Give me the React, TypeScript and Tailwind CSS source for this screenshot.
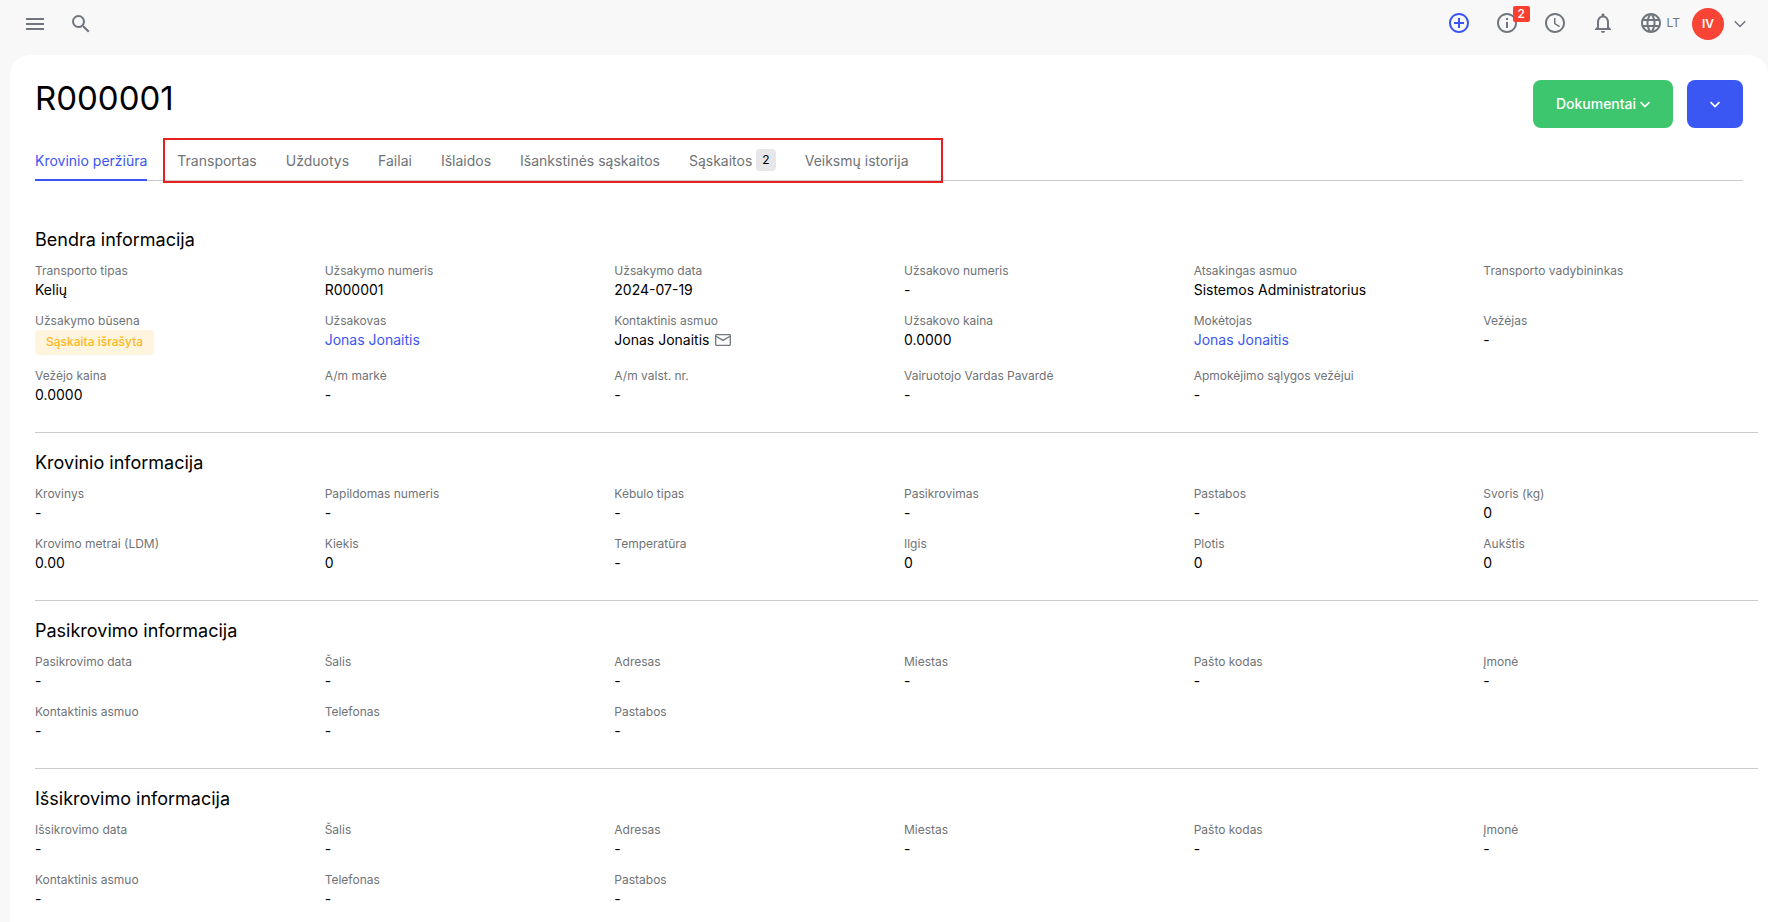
import type {ReactNode} from "react";
import {MdAddCircleOutline, MdInfoOutline, MdLanguage, MdMenu, MdNotificationsNone, MdSchedule, MdSearch} from "react-icons/md";

interface Field {
    label: string;
    value?: ReactNode;
}

interface Section {
    title: string;
    fields: Field[];
}

const tabs = [
    {label: "Transportas"},
    {label: "Užduotys"},
    {label: "Failai"},
    {label: "Išlaidos"},
    {label: "Išankstinės sąskaitos"},
    {label: "Sąskaitos", count: 2},
    {label: "Veiksmų istorija"},
];

function Chevron({className}: {className: string}) {
    return (
        <svg viewBox="0 0 12 8" fill="none" stroke="currentColor" className={className}>
            <path d="m.7 1.2 5.3 5.3 5.3-5.3"/>
        </svg>
    );
}

function PersonLink({name}: {name: string}) {
    return <a href="#" className="text-[#3b55f3]">{name}</a>;
}

function StatusBadge({text}: {text: string}) {
    return (
        <span className="inline-block h-[25px] px-[11px] rounded bg-[#fff4de] text-[#ffb822] text-xs leading-[24px] font-medium">
            {text}
        </span>
    );
}

function MailButton() {
    return (
        <button type="button" title="Siųsti el. laišką" className="text-[#70757e]">
            <svg width="16" height="12" viewBox="0 0 16 12" fill="none" stroke="currentColor" strokeWidth="1.3">
                <rect x=".7" y=".7" width="14.6" height="10.6" rx=".8"/>
                <path d="m1 2.2 7 4.2 7-4.2"/>
            </svg>
        </button>
    );
}

const sections: Section[] = [
    {
        title: "Bendra informacija",
        fields: [
            {label: "Transporto tipas", value: "Kelių"},
            {label: "Užsakymo numeris", value: "R000001"},
            {label: "Užsakymo data", value: "2024-07-19"},
            {label: "Užsakovo numeris", value: "-"},
            {label: "Atsakingas asmuo", value: "Sistemos Administratorius"},
            {label: "Transporto vadybininkas"},
            {label: "Užsakymo būsena", value: <StatusBadge text="Sąskaita išrašyta"/>},
            {label: "Užsakovas", value: <PersonLink name="Jonas Jonaitis"/>},
            {
                label: "Kontaktinis asmuo",
                value: <span className="flex items-center gap-1.5">Jonas Jonaitis <MailButton/></span>,
            },
            {label: "Užsakovo kaina", value: "0.0000"},
            {label: "Mokėtojas", value: <PersonLink name="Jonas Jonaitis"/>},
            {label: "Vežėjas", value: "-"},
            {label: "Vežėjo kaina", value: "0.0000"},
            {label: "A/m markė", value: "-"},
            {label: "A/m valst. nr.", value: "-"},
            {label: "Vairuotojo Vardas Pavardė", value: "-"},
            {label: "Apmokėjimo sąlygos vežėjui", value: "-"},
        ],
    },
    {
        title: "Krovinio informacija",
        fields: [
            {label: "Krovinys", value: "-"},
            {label: "Papildomas numeris", value: "-"},
            {label: "Kėbulo tipas", value: "-"},
            {label: "Pasikrovimas", value: "-"},
            {label: "Pastabos", value: "-"},
            {label: "Svoris (kg)", value: "0"},
            {label: "Krovimo metrai (LDM)", value: "0.00"},
            {label: "Kiekis", value: "0"},
            {label: "Temperatūra", value: "-"},
            {label: "Ilgis", value: "0"},
            {label: "Plotis", value: "0"},
            {label: "Aukštis", value: "0"},
        ],
    },
    {
        title: "Pasikrovimo informacija",
        fields: [
            {label: "Pasikrovimo data", value: "-"},
            {label: "Šalis", value: "-"},
            {label: "Adresas", value: "-"},
            {label: "Miestas", value: "-"},
            {label: "Pašto kodas", value: "-"},
            {label: "Įmonė", value: "-"},
            {label: "Kontaktinis asmuo", value: "-"},
            {label: "Telefonas", value: "-"},
            {label: "Pastabos", value: "-"},
        ],
    },
    {
        title: "Išsikrovimo informacija",
        fields: [
            {label: "Išsikrovimo data", value: "-"},
            {label: "Šalis", value: "-"},
            {label: "Adresas", value: "-"},
            {label: "Miestas", value: "-"},
            {label: "Pašto kodas", value: "-"},
            {label: "Įmonė", value: "-"},
            {label: "Kontaktinis asmuo", value: "-"},
            {label: "Telefonas", value: "-"},
            {label: "Pastabos", value: "-"},
        ],
    },
];

function TopBar() {
    return (
        <header className="flex items-center justify-between h-[55px] pl-[23px] pr-[22px] pb-[7px] text-[#70757e]">
            <div className="flex items-center gap-[22px]">
                <button type="button" title="Meniu"><MdMenu size={24}/></button>
                <button type="button" title="Paieška"><MdSearch size={24}/></button>
            </div>
            <div className="flex items-center">
                <div className="flex items-center gap-6 mr-3 pb-0.5">
                    <button type="button" title="Pridėti" className="text-[#3b55f3]"><MdAddCircleOutline size={24}/></button>
                    <button type="button" title="Informacija" className="relative">
                        <MdInfoOutline size={24}/>
                        <span className="absolute -top-[5px] left-[18px] w-[17px] h-4 rounded-xs bg-[#f9402f] text-white text-xs leading-4 font-medium text-center">
                            2
                        </span>
                    </button>
                    <button type="button" title="Laikas"><MdSchedule size={24}/></button>
                    <button type="button" title="Pranešimai"><MdNotificationsNone size={24}/></button>
                    <button type="button" title="Kalba" className="flex items-center gap-1 text-xs">
                        <MdLanguage size={24}/>
                        LT
                    </button>
                </div>
                <button type="button" title="Paskyra" className="flex items-center gap-2.5">
                    <span className="size-8 rounded-full bg-[#f84434] text-white text-xs leading-8 font-semibold">IV</span>
                    <Chevron className="w-3 h-2 stroke-[1.5]"/>
                </button>
            </div>
        </header>
    );
}

function Tabs() {
    return (
        <nav className="flex mt-2.5 border-b border-[#c8cacc] text-sm leading-5 text-[#6f7377]">
            <a href="#" className="-mb-px mr-4 pt-[13px] pb-2 border-b-2 border-[#3b55f3] text-[#3b55f3]">
                Krovinio peržiūra
            </a>
            <div className="flex gap-[29px] -mb-[3px] pl-3 pr-8 pt-[11px] pb-[10px] border-2 border-[#e81f1f]">
                {tabs.map((tab) => (
                    <a key={tab.label} href="#" className="flex gap-1">
                        {tab.label}
                        {tab.count && (
                            <span className="-mt-0.5 h-[22px] px-1.5 rounded bg-[#e7e7ea] text-xs leading-[22px] text-black">
                                {tab.count}
                            </span>
                        )}
                    </a>
                ))}
            </div>
        </nav>
    );
}

function InfoSection({section}: {section: Section}) {
    return (
        <section className="-mr-[15px] pt-4 pb-[27px] border-b border-[#c8cacc] last:border-b-0">
            <h2 className="text-lg leading-7">{section.title}</h2>
            <dl className="grid grid-cols-6 gap-x-[15px] gap-y-3 mt-2">
                {section.fields.map((field) => (
                    <div key={field.label}>
                        <dt className="text-xs leading-[18px] text-[#6f7377]">{field.label}</dt>
                        <dd className="text-sm leading-5">{field.value}</dd>
                    </div>
                ))}
            </dl>
        </section>
    );
}

export default function App() {
    return (
        <div className="min-h-screen bg-[#f8f8f8] font-['Inter',sans-serif] text-black">
            <TopBar/>
            <main className="ml-2.5 px-[25px] pt-[25px] rounded-t-[20px] bg-white">
                <div className="flex items-start justify-between">
                    <h1 className="text-[33px] leading-9">R000001</h1>
                    <div className="flex gap-[14px] text-white">
                        <button type="button" className="flex items-center justify-center gap-1 h-12 w-[140px] rounded-lg bg-[#3dc66d] text-sm font-medium">
                            Dokumentai
                            <Chevron className="w-[10px] h-[7px] stroke-2"/>
                        </button>
                        <button type="button" title="Veiksmai" className="flex items-center justify-center h-12 w-14 rounded-lg bg-[#3b57f3]">
                            <Chevron className="w-[10px] h-[7px] stroke-2"/>
                        </button>
                    </div>
                </div>
                <Tabs/>
                <div className="mt-[29px]">
                    {sections.map((section) => (
                        <InfoSection key={section.title} section={section}/>
                    ))}
                </div>
            </main>
        </div>
    );
}
